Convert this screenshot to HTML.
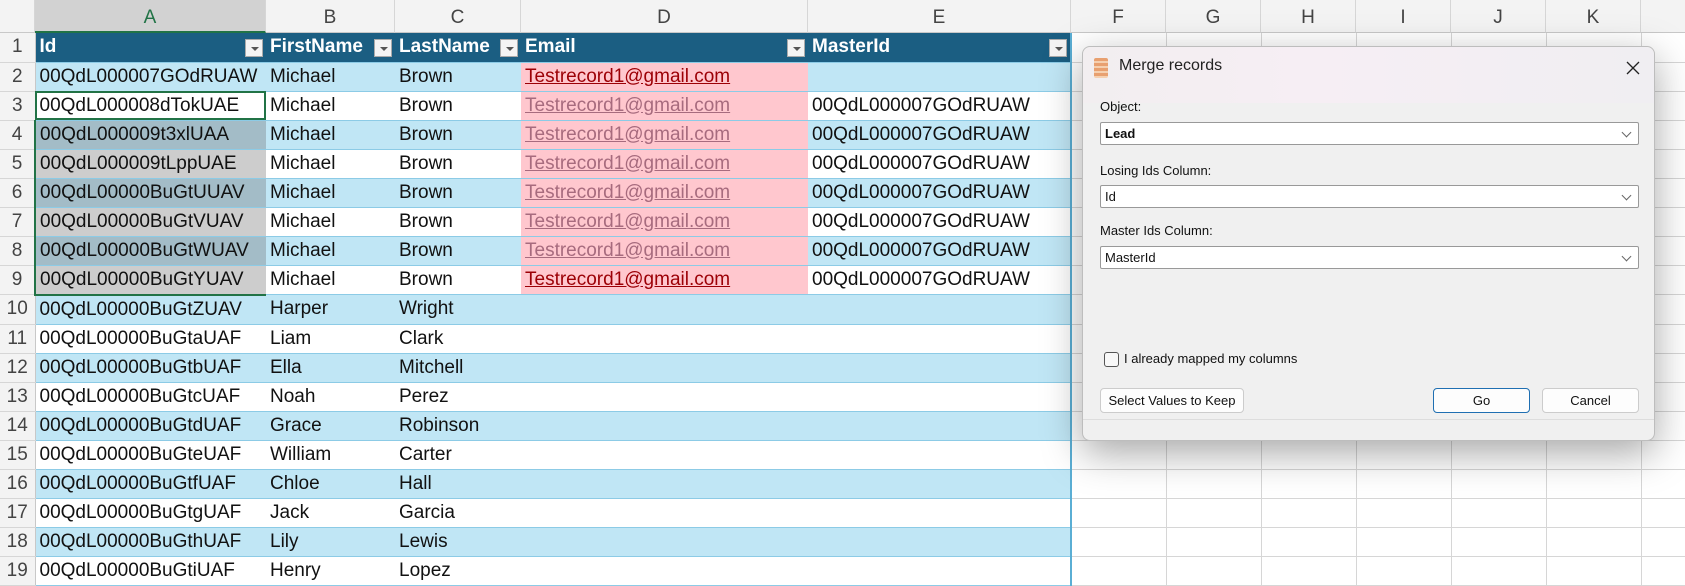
<!DOCTYPE html>
<html><head><meta charset="utf-8"><style>
*{box-sizing:border-box;margin:0;padding:0}
body{width:1685px;height:578px;overflow:hidden;background:#fff;font-family:"Liberation Sans",sans-serif;position:relative}
.ch{position:absolute;top:0;height:33px;background:#f3f3f3;border-bottom:1px solid #c8c8c8;border-right:1px solid #d6d6d6;color:#444;font-size:19px;text-align:center;line-height:36px}
table{position:absolute;top:33px;left:0;border-collapse:collapse;table-layout:fixed;width:1736px}
td{height:29px;font-size:19px;padding:0 0 0 4px;white-space:nowrap;overflow:hidden;border-bottom:1px solid #d6d6d6;border-right:1px solid #d6d6d6;color:#111;line-height:28px}
tr{height:29px}
td.rh{background:#f3f3f3;color:#444;text-align:center;padding:0;border-right:1px solid #c8c8c8}
tr.b td.t{background:#c0e6f5}
td.t{border-bottom:1px solid #8ccbe6;border-right:none}
tr.h td.t{background:#1b5e82;color:#fff;font-weight:bold;position:relative}
.dd{position:absolute;right:3px;top:6px;width:18px;height:18px;background:#f4f4f4;border:1px solid #aaa}
.dd:after{content:"";position:absolute;left:5px;top:7px;border:4px solid transparent;border-top:4px solid #555}
td.pk{background:#ffc7ce!important}
a{color:#9c0006;text-decoration:underline}
a.f{color:#a76b7e}
td.e{border-right:2px solid #5aaed4!important}
td.s1{background:#a3bcc7!important}
td.s2{background:#cdcdcd!important}
.dlg{position:absolute;left:1082px;top:46px;width:573px;height:395px;background:#f0f0f0;border:1px solid #bdbdbd;border-radius:8px;box-shadow:0 12px 40px rgba(0,0,0,.35);font-size:13px;color:#111}
.tb{height:56px;border-radius:8px 8px 0 0;background:linear-gradient(90deg,#f2eef0,#f6eef4 40%,#f0eef2)}
.lbl{position:absolute;left:17px}
.cb{position:absolute;left:17px;width:539px;height:23px;background:#fff;border:1px solid #999;border-radius:2px;padding-left:4px;line-height:21px}
.cb:after{content:"";position:absolute;right:8px;top:6px;width:6px;height:6px;border-right:1px solid #666;border-bottom:1px solid #666;transform:rotate(45deg)}
.btn{position:absolute;top:341px;height:25px;background:#fdfdfd;border:1px solid #ccc;border-radius:4px;text-align:center;line-height:23px}
</style></head><body>
<div class="ch" style="left:0;width:35px"></div>
<div class="ch" style="left:35px;width:231px;background:#d2d2d2;color:#217346;border-bottom:2px solid #217346">A</div>
<div class="ch" style="left:266px;width:129px">B</div>
<div class="ch" style="left:395px;width:126px">C</div>
<div class="ch" style="left:521px;width:287px">D</div>
<div class="ch" style="left:808px;width:263px">E</div>
<div class="ch" style="left:1071px;width:95px">F</div>
<div class="ch" style="left:1166px;width:95px">G</div>
<div class="ch" style="left:1261px;width:95px">H</div>
<div class="ch" style="left:1356px;width:95px">I</div>
<div class="ch" style="left:1451px;width:95px">J</div>
<div class="ch" style="left:1546px;width:95px">K</div>
<div class="ch" style="left:1641px;width:95px"></div>
<table>
<colgroup><col style="width:35px"><col style="width:231px"><col style="width:129px"><col style="width:126px"><col style="width:287px"><col style="width:263px"><col style="width:95px"><col style="width:95px"><col style="width:95px"><col style="width:95px"><col style="width:95px"><col style="width:95px"><col style="width:95px"></colgroup>
<tr class="h"><td class="rh">1</td><td class="t">Id<span class="dd"></span></td><td class="t">FirstName<span class="dd"></span></td><td class="t">LastName<span class="dd"></span></td><td class="t">Email<span class="dd"></span></td><td class="t e">MasterId<span class="dd"></span></td><td></td><td></td><td></td><td></td><td></td><td></td><td></td></tr>
<tr class="b"><td class="rh">2</td><td class="t">00QdL000007GOdRUAW</td><td class="t">Michael</td><td class="t">Brown</td><td class="t pk"><a>Testrecord1@gmail.com</a></td><td class="t e"></td><td></td><td></td><td></td><td></td><td></td><td></td><td></td></tr>
<tr><td class="rh">3</td><td class="t" style="outline:2px solid #217346;outline-offset:-2px">00QdL000008dTokUAE</td><td class="t">Michael</td><td class="t">Brown</td><td class="t pk"><a class="f">Testrecord1@gmail.com</a></td><td class="t e">00QdL000007GOdRUAW</td><td></td><td></td><td></td><td></td><td></td><td></td><td></td></tr>
<tr class="b"><td class="rh">4</td><td class="t s1" style="border-left:2px solid #217346">00QdL000009t3xlUAA</td><td class="t">Michael</td><td class="t">Brown</td><td class="t pk"><a class="f">Testrecord1@gmail.com</a></td><td class="t e">00QdL000007GOdRUAW</td><td></td><td></td><td></td><td></td><td></td><td></td><td></td></tr>
<tr><td class="rh">5</td><td class="t s2" style="border-left:2px solid #217346">00QdL000009tLppUAE</td><td class="t">Michael</td><td class="t">Brown</td><td class="t pk"><a class="f">Testrecord1@gmail.com</a></td><td class="t e">00QdL000007GOdRUAW</td><td></td><td></td><td></td><td></td><td></td><td></td><td></td></tr>
<tr class="b"><td class="rh">6</td><td class="t s1" style="border-left:2px solid #217346">00QdL00000BuGtUUAV</td><td class="t">Michael</td><td class="t">Brown</td><td class="t pk"><a class="f">Testrecord1@gmail.com</a></td><td class="t e">00QdL000007GOdRUAW</td><td></td><td></td><td></td><td></td><td></td><td></td><td></td></tr>
<tr><td class="rh">7</td><td class="t s2" style="border-left:2px solid #217346">00QdL00000BuGtVUAV</td><td class="t">Michael</td><td class="t">Brown</td><td class="t pk"><a class="f">Testrecord1@gmail.com</a></td><td class="t e">00QdL000007GOdRUAW</td><td></td><td></td><td></td><td></td><td></td><td></td><td></td></tr>
<tr class="b"><td class="rh">8</td><td class="t s1" style="border-left:2px solid #217346">00QdL00000BuGtWUAV</td><td class="t">Michael</td><td class="t">Brown</td><td class="t pk"><a class="f">Testrecord1@gmail.com</a></td><td class="t e">00QdL000007GOdRUAW</td><td></td><td></td><td></td><td></td><td></td><td></td><td></td></tr>
<tr><td class="rh">9</td><td class="t s2" style="border-left:2px solid #217346;border-bottom:2px solid #217346">00QdL00000BuGtYUAV</td><td class="t">Michael</td><td class="t">Brown</td><td class="t pk"><a>Testrecord1@gmail.com</a></td><td class="t e">00QdL000007GOdRUAW</td><td></td><td></td><td></td><td></td><td></td><td></td><td></td></tr>
<tr class="b"><td class="rh">10</td><td class="t">00QdL00000BuGtZUAV</td><td class="t">Harper</td><td class="t">Wright</td><td class="t"></td><td class="t e"></td><td></td><td></td><td></td><td></td><td></td><td></td><td></td></tr>
<tr><td class="rh">11</td><td class="t">00QdL00000BuGtaUAF</td><td class="t">Liam</td><td class="t">Clark</td><td class="t"></td><td class="t e"></td><td></td><td></td><td></td><td></td><td></td><td></td><td></td></tr>
<tr class="b"><td class="rh">12</td><td class="t">00QdL00000BuGtbUAF</td><td class="t">Ella</td><td class="t">Mitchell</td><td class="t"></td><td class="t e"></td><td></td><td></td><td></td><td></td><td></td><td></td><td></td></tr>
<tr><td class="rh">13</td><td class="t">00QdL00000BuGtcUAF</td><td class="t">Noah</td><td class="t">Perez</td><td class="t"></td><td class="t e"></td><td></td><td></td><td></td><td></td><td></td><td></td><td></td></tr>
<tr class="b"><td class="rh">14</td><td class="t">00QdL00000BuGtdUAF</td><td class="t">Grace</td><td class="t">Robinson</td><td class="t"></td><td class="t e"></td><td></td><td></td><td></td><td></td><td></td><td></td><td></td></tr>
<tr><td class="rh">15</td><td class="t">00QdL00000BuGteUAF</td><td class="t">William</td><td class="t">Carter</td><td class="t"></td><td class="t e"></td><td></td><td></td><td></td><td></td><td></td><td></td><td></td></tr>
<tr class="b"><td class="rh">16</td><td class="t">00QdL00000BuGtfUAF</td><td class="t">Chloe</td><td class="t">Hall</td><td class="t"></td><td class="t e"></td><td></td><td></td><td></td><td></td><td></td><td></td><td></td></tr>
<tr><td class="rh">17</td><td class="t">00QdL00000BuGtgUAF</td><td class="t">Jack</td><td class="t">Garcia</td><td class="t"></td><td class="t e"></td><td></td><td></td><td></td><td></td><td></td><td></td><td></td></tr>
<tr class="b"><td class="rh">18</td><td class="t">00QdL00000BuGthUAF</td><td class="t">Lily</td><td class="t">Lewis</td><td class="t"></td><td class="t e"></td><td></td><td></td><td></td><td></td><td></td><td></td><td></td></tr>
<tr><td class="rh">19</td><td class="t">00QdL00000BuGtiUAF</td><td class="t">Henry</td><td class="t">Lopez</td><td class="t"></td><td class="t e"></td><td></td><td></td><td></td><td></td><td></td><td></td><td></td></tr>
</table>
<div class="dlg">
<div class="tb"></div>
<div style="position:absolute;left:11px;top:11px;width:14px;height:20px;background:repeating-linear-gradient(#e8a070 0 3px,#f5d0b0 3px 5px);border-radius:2px"></div>
<div style="position:absolute;left:36px;top:10px;font-size:16px;color:#222">Merge records</div>
<svg style="position:absolute;right:14px;top:14px" width="14" height="14" viewBox="0 0 14 14"><path d="M1 1L13 13M13 1L1 13" stroke="#222" stroke-width="1.3" fill="none"/></svg>
<div class="lbl" style="top:52px">Object:</div>
<div class="cb" style="top:75px;font-weight:bold">Lead</div>
<div class="lbl" style="top:116px">Losing Ids Column:</div>
<div class="cb" style="top:138px">Id</div>
<div class="lbl" style="top:176px">Master Ids Column:</div>
<div class="cb" style="top:199px">MasterId</div>
<div style="position:absolute;left:21px;top:305px;width:15px;height:15px;border:1px solid #555;border-radius:3px;background:#f8f8f8"></div>
<div style="position:absolute;left:41px;top:304px">I already mapped my columns</div>
<div class="btn" style="left:17px;width:144px">Select Values to Keep</div>
<div class="btn" style="left:350px;width:97px;border:1px solid #1f6fb2">Go</div>
<div class="btn" style="left:459px;width:97px">Cancel</div>
<div style="position:absolute;left:0;right:0;top:372px;border-top:1px solid #ddd"></div>
</div>
</body></html>
